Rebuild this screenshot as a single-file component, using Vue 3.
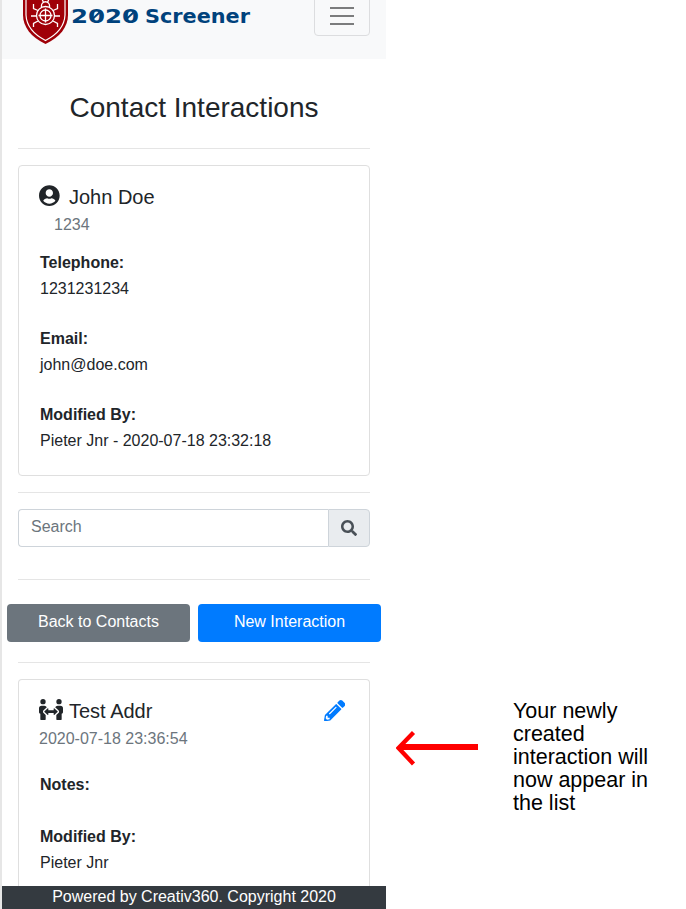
<script setup>
const contact = [
  { label: 'Telephone:', value: '1231231234' },
  { label: 'Email:', value: 'john@doe.com' },
  { label: 'Modified By:', value: 'Pieter Jnr - 2020-07-18 23:32:18' },
]
</script>

<template>
  <div class="page">
    <main class="phone">
      <header class="navbar">
        <div class="brand">
          <svg class="shield" width="48" height="54" viewBox="0 0 48 54">
            <path d="M1 0H46V25C46 37 38 47 23.500 54C9 47 1 37 1 25Z" fill="#a00008" />
            <path d="M4 0V25C4.500 36 11 44 23.500 50.500C36 44 42.500 36 43 25V0" fill="none" stroke="#fff" stroke-width="1.200" />
            <g fill="none" stroke="#fff" stroke-width="1.300">
              <circle cx="23.500" cy="25.500" r="9" />
              <circle cx="23.500" cy="25.500" r="5.500" />
              <path d="M23.500 18.500V32.500M16.500 25.500H30.500M19.500 17C18.500 10 28.500 10 27.500 17M21.500 12.500L20 9M25.500 12.500L27 9M16 20.500L11.500 18.500V14M31 20.500L35.500 18.500V14M14.500 26H9M32.500 26H38M16 31L11.500 33.500V37M31 31L35.500 33.500V37" />
            </g>
          </svg>
          <svg class="wordmark" width="182" height="24" viewBox="0 0 182 24">
            <text x="0" y="18.500" textLength="68" lengthAdjust="spacingAndGlyphs">2020</text>
            <text x="74" y="18.500" textLength="105" lengthAdjust="spacingAndGlyphs">Screener</text>
            <path d="M21 15.500L30 7M55 15.500L64 7" stroke="#00427c" stroke-width="1.800" />
          </svg>
        </div>
        <button class="toggler" aria-label="Menu"><i></i><i></i><i></i></button>
      </header>

      <h1>Contact Interactions</h1>
      <hr />

      <section class="card contact">
        <div class="title">
          <svg width="20.670" height="21.330" viewBox="0 0 496 512"><path fill="currentColor" d="M248 8C111 8 0 119 0 256s111 248 248 248 248-111 248-248S385 8 248 8zm0 96c48.600 0 88 39.400 88 88s-39.400 88-88 88-88-39.400-88-88 39.400-88 88-88zm0 344c-58.700 0-111.300-26.600-146.500-68.200 18.800-35.400 55.600-59.800 98.500-59.800 2.400 0 4.800.4 7.100 1.100 13 4.200 26.600 6.900 40.900 6.900 14.300 0 28-2.700 40.900-6.900 2.300-.7 4.700-1.100 7.100-1.100 42.900 0 79.700 24.400 98.500 59.800C359.300 421.400 306.700 448 248 448z" /></svg>
          <h2>John Doe</h2>
        </div>
        <p class="sub indent">1234</p>
        <dl>
          <template v-for="row in contact" :key="row.label">
            <dt>{{ row.label }}</dt>
            <dd>{{ row.value }}</dd>
          </template>
        </dl>
      </section>

      <hr />
      <div class="search">
        <input type="text" placeholder="Search" />
        <span class="addon">
          <svg width="16" height="16" viewBox="0 0 512 512"><path fill="currentColor" d="M505 442.700L405.300 343c-4.500-4.500-10.600-7-17-7H372c27.600-35.300 44-79.700 44-128C416 93.100 322.900 0 208 0S0 93.100 0 208s93.100 208 208 208c48.300 0 92.700-16.400 128-44v16.300c0 6.400 2.500 12.500 7 17l99.700 99.700c9.400 9.400 24.600 9.400 33.900 0l28.300-28.300c9.400-9.400 9.400-24.600.1-34zM208 336c-70.700 0-128-57.200-128-128 0-70.700 57.200-128 128-128 70.700 0 128 57.200 128 128 0 70.700-57.200 128-128 128z" /></svg>
        </span>
      </div>
      <hr class="after-search" />
      <div class="actions">
        <button class="secondary">Back to Contacts</button>
        <button class="primary">New Interaction</button>
      </div>
      <hr class="after-actions" />

      <section class="card interaction">
        <div class="title">
          <svg class="people" width="24" height="21.330" viewBox="0 0 576 512"><path fill="currentColor" d="M96,128A64,64,0,1,0,32,64,64,64,0,0,0,96,128Zm0,176.080a44.110,44.110,0,0,1,13.640-32L181.770,204c1.650-1.550,3.770-2.310,5.610-3.570A63.910,63.910,0,0,0,128,160H64A64,64,0,0,0,0,224v96a32,32,0,0,0,32,32V480a32,32,0,0,0,32,32h64a32,32,0,0,0,32-32V383.610l-50.360-47.530A44.080,44.080,0,0,1,96,304.080ZM480,128a64,64,0,1,0-64-64A64,64,0,0,0,480,128Zm32,32H448a63.910,63.910,0,0,0-59.380,40.420c1.840,1.270,4,2,5.620,3.590l72.120,68.060a44.370,44.370,0,0,1,0,64L416,383.620V480a32,32,0,0,0,32,32h64a32,32,0,0,0,32-32V352a32,32,0,0,0,32-32V224A64,64,0,0,0,512,160ZM444.400,295.340l-72.120-68.060A12,12,0,0,0,352,236v36H224V236a12,12,0,0,0-20.280-8.730L131.600,295.340a12.400,12.400,0,0,0,0,17.470l72.120,68.070A12,12,0,0,0,224,372.140V336H352v36.140a12,12,0,0,0,20.280,8.740l72.120-68.070A12.400,12.400,0,0,0,444.400,295.340Z" /></svg>
          <h2>Test Addr</h2>
          <svg class="edit" width="21.330" height="21.330" viewBox="0 0 512 512"><path fill="currentColor" d="M497.900 142.100l-46.100 46.100c-4.700 4.700-12.300 4.700-17 0l-111-111c-4.700-4.700-4.700-12.300 0-17l46.100-46.100c18.700-18.700 49.100-18.700 67.900 0l60.100 60.100c18.800 18.700 18.800 49.100 0 67.900zM284.200 99.800L21.600 362.400.4 483.900c-2.900 16.400 11.400 30.600 27.800 27.800l121.500-21.300 262.600-262.600c4.700-4.700 4.700-12.300 0-17l-111-111c-4.800-4.700-12.400-4.700-17.100 0zM124.100 339.900c-5.500-5.500-5.500-14.300 0-19.800l154-154c5.500-5.500 14.300-5.500 19.800 0s5.500 14.300 0 19.800l-154 154c-5.500 5.500-14.300 5.500-19.800 0zM88 424h48v36.300l-64.500 11.300-31.100-31.100L51.700 376H88v48z" /></svg>
        </div>
        <p class="sub">2020-07-18 23:36:54</p>
        <dl>
          <dt>Notes:</dt>
          <dd class="empty"></dd>
          <dt>Modified By:</dt>
          <dd>Pieter Jnr</dd>
        </dl>
      </section>

      <footer>Powered by Creativ360. Copyright 2020</footer>
    </main>

    <aside class="note">
      <svg width="84" height="38" viewBox="0 0 84 38" fill="none" stroke="#f00">
        <path d="M4 17H82" stroke-width="6" />
        <path d="M17.500 2.500L2.500 18L17.500 34" stroke-width="4.300" />
      </svg>
      <p>Your newly<br />created<br />interaction will<br />now appear in<br />the list</p>
    </aside>
  </div>
</template>

<style>
body {
  margin: 0;
  background: #fff;
}
</style>

<style scoped>
* {
  box-sizing: border-box;
}
.page {
  display: flex;
  width: 686px;
  height: 909px;
  overflow: hidden;
  font: 16px/24px "Liberation Sans", Arial, sans-serif;
  color: #212529;
}
.phone {
  display: flex;
  flex-direction: column;
  width: 386px;
  height: 909px;
  border-left: 2px solid #e6e6e6;
}
.navbar {
  flex: none;
  display: flex;
  justify-content: space-between;
  align-items: flex-end;
  height: 59px;
  padding: 0 16px 0 20px;
  background: #f8f9fa;
}
.brand {
  display: flex;
  align-items: flex-end;
  height: 59px;
  padding-bottom: 15px;
}
.shield {
  margin-right: 1px;
}
.wordmark {
  margin-bottom: 16px;
}
.wordmark text {
  font: bold 20px "DejaVu Sans", sans-serif;
  fill: #00427c;
}
.toggler {
  display: flex;
  flex-direction: column;
  justify-content: flex-end;
  align-items: center;
  gap: 6px;
  width: 56px;
  height: 40px;
  margin-bottom: 23px;
  padding: 0 0 10px;
  border: 1px solid #dcdddf;
  border-radius: 4px;
  background: none;
}
.toggler i {
  width: 24px;
  height: 2px;
  background: #7b7c7d;
}
h1 {
  flex: none;
  margin: 32px 0 24px;
  font-size: 28px;
  line-height: 33px;
  font-weight: 400;
  text-align: center;
}
hr {
  flex: none;
  width: 352px;
  height: 1px;
  margin: 0 16px 16px;
  border: 0;
  background: #e5e5e5;
}
.card {
  flex: none;
  margin: 0 16px;
  padding: 19px 20px 0;
  border: 1px solid #dfdfdf;
  border-radius: 4px;
}
.contact {
  height: 311px;
  margin-bottom: 16px;
}
.title {
  display: flex;
  align-items: flex-start;
  height: 24px;
}
.title svg {
  flex: none;
}
h2 {
  width: 261px;
  margin: 0;
  padding-left: 9.300px;
  font-size: 20px;
  line-height: 24px;
  font-weight: 400;
}
.interaction h2 {
  flex: none;
  padding-left: 6px;
}
.people {
  margin-top: -0.500px;
}
.interaction .edit {
  margin: 1px 0 0;
  color: #007bff;
}
.sub {
  margin: 4px 0 0;
  color: #6c757d;
}
.indent {
  padding-left: 15px;
}
dl {
  margin: 13px 0 0;
  padding-left: 1px;
  line-height: 26px;
}
dt {
  font-weight: 700;
}
dd {
  margin: 0 0 24px;
}
.search {
  flex: none;
  display: flex;
  height: 38px;
  margin: 0 16px 32px;
}
input {
  flex: 1;
  min-width: 0;
  padding: 0 12px 2px;
  border: 1px solid #ced4da;
  border-right: 0;
  border-radius: 4px 0 0 4px;
  font: inherit;
}
input::placeholder {
  color: #6c757d;
  opacity: 1;
}
.addon {
  display: flex;
  align-items: center;
  justify-content: center;
  width: 42px;
  border: 1px solid #ced4da;
  border-radius: 0 4px 4px 0;
  background: #e9ecef;
  color: #495057;
}
.after-search {
  margin-bottom: 24px;
}
.actions {
  flex: none;
  display: flex;
  gap: 8px;
  margin: 0 5px 20px;
}
.actions button {
  flex: 1;
  height: 38px;
  padding: 0 0 2px;
  border: 0;
  border-radius: 4px;
  font: inherit;
  color: #fff;
}
.secondary {
  background: #6c757d;
}
.primary {
  background: #007bff;
}
.interaction {
  height: 207px;
  border-bottom: 0;
  border-radius: 4px 4px 0 0;
}
.interaction dl {
  margin-top: 21px;
}
.interaction dd.empty {
  height: 26px;
  margin: 0;
}
footer {
  flex: none;
  height: 23px;
  line-height: 22px;
  background: #343a40;
  color: #fff;
  text-align: center;
}
.note {
  display: flex;
  align-items: flex-start;
  padding: 699px 0 0 10px;
  color: #000;
}
.note svg {
  margin: 31px 33px 0 0;
}
.note p {
  margin: 1px 0 0;
  font-size: 21.500px;
  line-height: 23px;
  white-space: nowrap;
}
</style>
